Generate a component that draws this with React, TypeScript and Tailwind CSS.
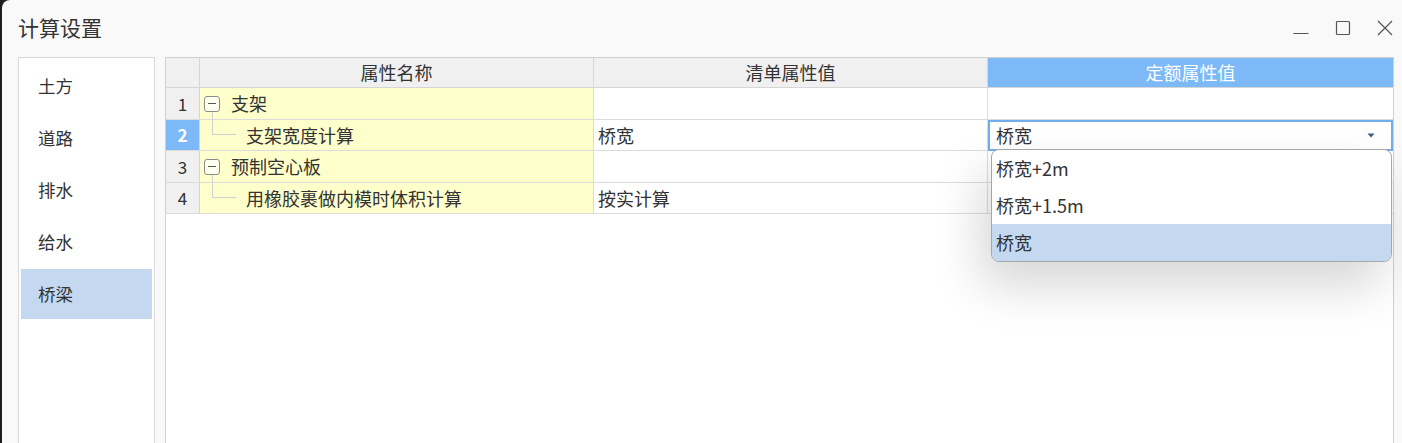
import React from "react";

const font = "font-['Microsoft_YaHei','Noto_Sans_CJK_SC',sans-serif]";

function ExpandBox({ line }: { line?: boolean }) {
  return (
    <div className="relative ml-[4px] flex h-[16px] w-[16px] shrink-0 items-center justify-center rounded-[3px] border border-[#8c8c8c] bg-[#fffff0]">
      <div className="h-px w-[8px] bg-[#555]" />
      {line && <div className="absolute left-[7px] top-[15px] h-[9px] w-px bg-[#cfcfcf]" />}
    </div>
  );
}

function Connector() {
  return (
    <div className="ml-[12px] flex h-full w-[24px] shrink-0 flex-col">
      <div className="h-1/2 border-b border-l border-[#cfcfcf]" />
    </div>
  );
}

function NumCell({ n, active, h }: { n: number; active?: boolean; h: string }) {
  return (
    <div
      className={`flex w-[34px] shrink-0 items-center justify-center border-r border-[#d6d6d6] text-[17px] ${
        active ? "bg-[#7cb9f6] font-bold text-white" : "bg-[#f0f0f0] text-[#333]"
      } ${h}`}
    >
      {n}
    </div>
  );
}

export default function App() {
  const menu = ["土方", "道路", "排水", "给水", "桥梁"];
  return (
    <div className={`h-[443px] w-[1402px] overflow-hidden bg-[#1e1e1e] pl-[2px] ${font}`}>
      <div className="flex h-[480px] flex-col rounded-tl-[8px] bg-[#f9f9f9] text-[#333]">
        <div className="flex h-[56px] shrink-0 items-center pl-[16px] pr-[8px]">
          <div className="flex-1 text-[21px] text-[#333]">计算设置</div>
          <div className="flex items-center gap-[26px] pr-[1px]">
            <svg width="16" height="16" viewBox="0 0 16 16">
              <line x1="0.5" y1="13.5" x2="15.5" y2="13.5" stroke="#555" strokeWidth="1" />
            </svg>
            <svg width="16" height="16" viewBox="0 0 16 16">
              <rect x="1.5" y="1.5" width="13" height="13" rx="1" fill="none" stroke="#555" strokeWidth="1.2" />
            </svg>
            <svg width="16" height="16" viewBox="0 0 16 16">
              <path d="M1 1 L15 15 M15 1 L1 15" stroke="#555" strokeWidth="1.2" />
            </svg>
          </div>
        </div>

        <div className="mt-px flex flex-1 gap-[10px] pl-[16px] pr-[8px]">
          <div className="flex w-[137px] shrink-0 flex-col gap-[2px] border border-[#d9d9d9] bg-white px-[2px] pt-[3px]">
            {menu.map((m) => (
              <div
                key={m}
                className={`flex h-[50px] items-center pl-[17px] text-[17.5px] text-[#333] ${
                  m === "桥梁" ? "bg-[#c4d9f0]" : ""
                }`}
              >
                {m}
              </div>
            ))}
          </div>

          <div className="flex-1 border border-[#d0d0d0] bg-white text-[18px]">
            <div className="flex h-[30px] border-b border-[#d6d6d6]">
              <div className="w-[34px] shrink-0 border-r border-[#d6d6d6] bg-[#f0f0f0]" />
              <div className="flex w-[394px] shrink-0 items-center justify-center border-r border-[#d6d6d6] bg-[#f0f0f0]">属性名称</div>
              <div className="flex w-[394px] shrink-0 items-center justify-center border-r border-[#d6d6d6] bg-[#f0f0f0]">清单属性值</div>
              <div className="flex flex-1 items-center justify-center bg-[#7cb9f6] text-white">定额属性值</div>
            </div>

            <div className="flex h-[32px] border-b border-[#dcdcdc]">
              <NumCell n={1} h="h-[31px]" />
              <div className="flex w-[394px] shrink-0 items-center border-r border-[#dcdcdc] bg-[#ffffcc]">
                <ExpandBox line />
                <span className="ml-[11px]">支架</span>
              </div>
              <div className="w-[394px] shrink-0 border-r border-[#dcdcdc]" />
              <div className="flex-1" />
            </div>

            <div className="flex h-[31px] border-b border-[#dcdcdc]">
              <NumCell n={2} active h="h-[30px]" />
              <div className="flex w-[394px] shrink-0 items-center border-r border-[#dcdcdc] bg-[#ffffcc]">
                <Connector />
                <span className="ml-[10px]">支架宽度计算</span>
              </div>
              <div className="flex w-[394px] shrink-0 items-center border-r border-[#dcdcdc] pl-[4px]">桥宽</div>
              <div className="relative flex-1">
                <div className="absolute inset-x-0 -bottom-px top-0 flex items-center justify-between border-2 border-[#72adee] bg-white pl-[6px] pr-[16px]">
                  <span>桥宽</span>
                  <svg width="8" height="5" viewBox="0 0 8 5">
                    <path d="M0.5 0.5 L7.5 0.5 L4 4.5 Z" fill="#3d5c85" />
                  </svg>
                </div>
                <div className="absolute left-[3px] top-[29px] z-10 w-[401px] overflow-hidden rounded-[8px] border border-[#a6a6a6] bg-white shadow-[-10px_24px_48px_rgba(0,0,0,0.16)]">
                  <div className="flex h-[37px] items-center pl-[4px]">桥宽+2m</div>
                  <div className="flex h-[37px] items-center pl-[4px]">桥宽+1.5m</div>
                  <div className="flex h-[37px] items-center bg-[#c4d9f0] pl-[4px]">桥宽</div>
                </div>
              </div>
            </div>

            <div className="flex h-[32px] border-b border-[#dcdcdc]">
              <NumCell n={3} h="h-[31px]" />
              <div className="flex w-[394px] shrink-0 items-center border-r border-[#dcdcdc] bg-[#ffffcc]">
                <ExpandBox line />
                <span className="ml-[11px]">预制空心板</span>
              </div>
              <div className="w-[394px] shrink-0 border-r border-[#dcdcdc]" />
              <div className="flex-1" />
            </div>

            <div className="flex h-[31px] border-b border-[#dcdcdc]">
              <NumCell n={4} h="h-[30px]" />
              <div className="flex w-[394px] shrink-0 items-center border-r border-[#dcdcdc] bg-[#ffffcc]">
                <Connector />
                <span className="ml-[10px]">用橡胶裹做内模时体积计算</span>
              </div>
              <div className="flex w-[394px] shrink-0 items-center border-r border-[#dcdcdc] pl-[4px]">按实计算</div>
              <div className="flex-1" />
            </div>
          </div>
        </div>
      </div>
    </div>
  );
}
